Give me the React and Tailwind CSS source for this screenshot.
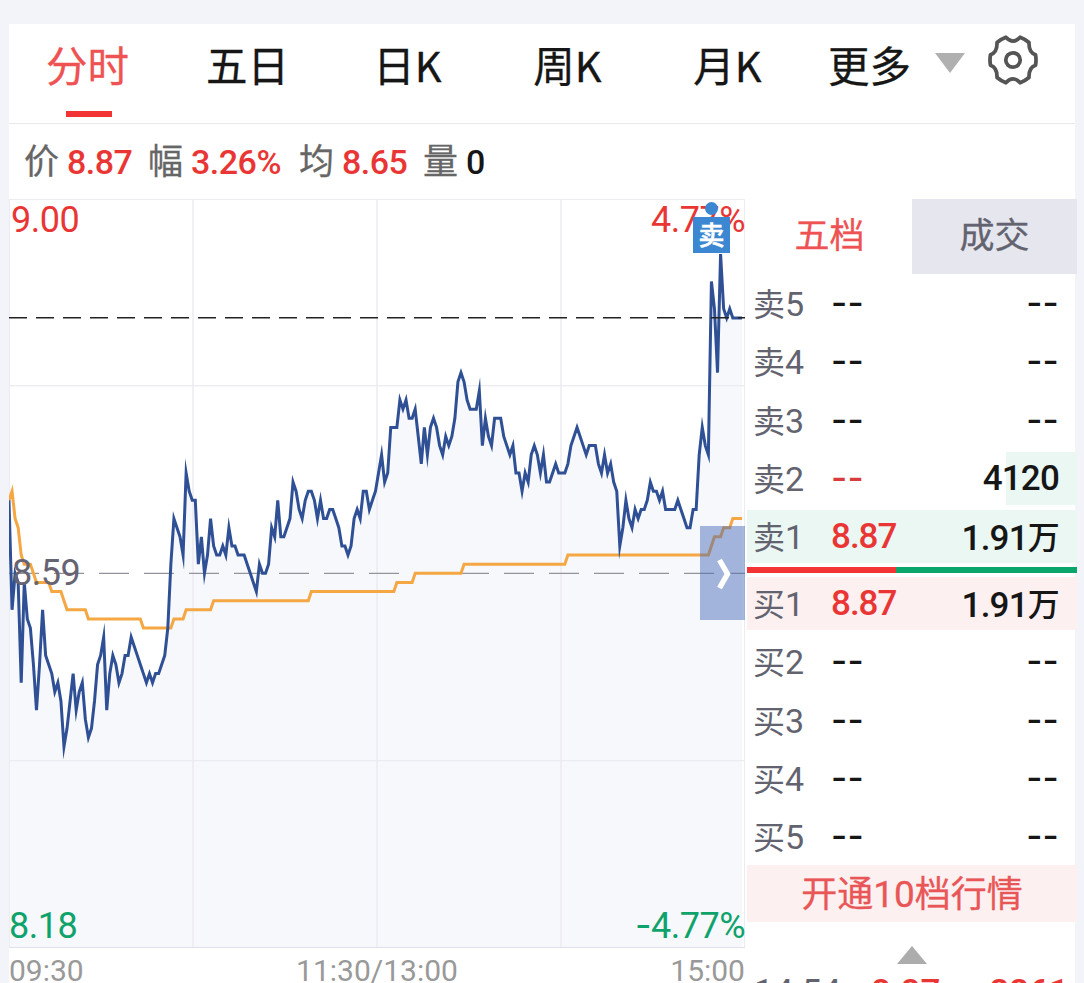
import React, { useState } from 'react';

const tabs = ['分时', '五日', '日K', '周K', '月K'];

const stats = [
  { label: '价', value: '8.87', tone: 'text-[#e93635]', width: 'w-[124px]' },
  { label: '幅', value: '3.26%', tone: 'text-[#e93635]', width: 'w-[151px]' },
  { label: '均', value: '8.65', tone: 'text-[#e93635]', width: 'w-[124px]' },
  { label: '量', value: '0', tone: 'text-[#161616]', width: 'w-[70px]' },
];

const asks = [
  { label: '卖', level: 5 },
  { label: '卖', level: 4 },
  { label: '卖', level: 3 },
  { label: '卖', level: 2, volume: '4120', depth: 21.5, red: true },
  { label: '卖', level: 1, price: '8.87', volume: '1.91', unit: '万', depth: 100 },
];

const bids = [
  { label: '买', level: 1, price: '8.87', volume: '1.91', unit: '万', depth: 100 },
  { label: '买', level: 2 },
  { label: '买', level: 3 },
  { label: '买', level: 4 },
  { label: '买', level: 5 },
];

// One value per minute, in cents relative to the previous close (8.59)
const prices = [
  8, -4, 0, -1, -12, -1, -5, -6, -10, -15, -10, -4, -9, -10, -11, -13, -12, -14, -19, -17,
  -14, -11, -15, -13, -12, -16, -18, -17, -14, -10, -9, -7, -15, -11, -9, -10, -12, -11, -9, -9,
  -7, -8, -9, -10, -11, -12, -11, -12, -11, -11, -10, -9, -6, 1, 6, 5, 4, 2, 11, 9,
  8, 8, 1, 4, 0, 2, 6, 3, 2, 2, 3, 2, 5, 3, 3, 2, 2, 2, 1, 0,
  -1, -2, 1, 0, 0, 1, 5, 4, 8, 4, 4, 5, 6, 10, 9, 7, 6, 8, 9, 9,
  8, 6, 8, 6, 6, 7, 7, 6, 5, 3, 3, 2, 3, 6, 7, 6, 9, 9, 7, 8,
  9, 11, 13, 10, 11, 16, 16, 16, 19, 18, 19, 17, 17, 18, 15, 12, 16, 13, 16, 17,
  16, 14, 13, 15, 14, 15, 17, 21, 22, 21, 19, 18, 18, 18, 20, 14, 17, 15, 14, 17,
  17, 17, 15, 14, 13, 14, 11, 11, 9, 11, 10, 13, 14, 13, 11, 13, 10, 10, 11, 12,
  11, 11, 11, 12, 14, 15, 16, 15, 14, 13, 14, 14, 14, 12, 11, 13, 11, 12, 10, 9,
  3, 5, 8, 6, 5, 7, 6, 7, 7, 8, 10, 9, 9, 8, 9, 7, 7, 7, 7, 8,
  7, 6, 5, 5, 7, 7, 13, 16, 14, 13, 32, 29, 22, 35, 29, 28, 29, 28, 28, 28,
  28,
];

// [minute, cents] corners of the average price line
const average = [
  [0, 8], [1, 9], [2, 6], [3, 5], [4, 2], [5, 1], [7, 1], [8, 0], [9, -1], [13, -1],
  [14, -2], [17, -2], [18, -3], [19, -4], [25, -4], [26, -5], [43, -5], [44, -6], [53, -6],
  [54, -5], [57, -5], [58, -4], [66, -4], [67, -3], [98, -3], [99, -2], [126, -2], [127, -1],
  [132, -1], [133, 0], [148, 0], [149, 1], [182, 1], [183, 2], [229, 2], [230, 3], [231, 4],
  [233, 4], [234, 5], [236, 5], [237, 6], [240, 6],
];

const px = (minute) => (minute * 3.054).toFixed(2);
const py = (cents) => (374.3 - cents * 9.12).toFixed(2);

const priceLine = prices.map((cents, i) => `${px(i)},${py(cents)}`).join(' ');
const averageLine = average.map(([minute, cents]) => `${px(minute)},${py(cents)}`).join(' ');

function GearIcon() {
  return (
    <svg width="52" height="52" viewBox="-27 -27 54 54" fill="none" stroke="#555" strokeWidth="3.9" strokeLinejoin="round">
      <path d="M7.4-23.6Q12.6-21.6 16.6-18.2Q16.2-7.9 23.4-5.4Q24.4 0 23.4 5.4Q16.2 7.9 16.6 18.2Q12.6 21.6 7.4 23.6Q0 15.6-7.4 23.6Q-12.6 21.6-16.6 18.2Q-16.2 7.9-23.4 5.4Q-24.4 0-23.4-5.4Q-16.2-7.9-16.6-18.2Q-12.6-21.6-7.4-23.6Q0-15.6 7.4-23.6Z" />
      <circle r="7.5" />
    </svg>
  );
}

function Chart() {
  return (
    <div className="relative h-[749px] w-[736px]">
      <svg width="736" height="749" viewBox="0 0 736 749" className="block overflow-hidden font-[Roboto,sans-serif]">
        <polygon points={`0,748 ${priceLine} 733,748`} fill="#f6f8fc" />
        <g fill="#ebecf2">
          <rect x="0" y="0" width="736" height="1" />
          <rect x="0" y="186" width="736" height="1.3" />
          <rect x="0" y="561" width="736" height="1.2" />
          <rect x="0" y="748" width="736" height="1" fill="#dfe1e8" />
          <rect x="0" y="0" width="1" height="748" />
          <rect x="183.2" y="0" width="1.6" height="748" />
          <rect x="367.2" y="0" width="1.6" height="748" />
          <rect x="551.2" y="0" width="1.6" height="748" />
          <rect x="735" y="0" width="1" height="748" />
        </g>
        <line x1="0" y1="374.4" x2="736" y2="374.4" stroke="#93939c" strokeWidth="1.3" strokeDasharray="30 15" />
        <polyline points={averageLine} fill="none" stroke="#f4a742" strokeWidth="3" strokeMiterlimit="10" />
        <polyline points={priceLine} fill="none" stroke="#2f5095" strokeWidth="3" strokeMiterlimit="10" />
        <line x1="0" y1="118.7" x2="736" y2="118.7" stroke="#222" strokeWidth="1.4" strokeDasharray="18 9" />
        <g fontSize="36" letterSpacing="-0.5">
          <text x="2" y="32.5" fill="#e93635">9.00</text>
          <text x="736" y="32.5" fill="#e93635" textAnchor="end">4.77%</text>
          <text x="3" y="385.5" fill="#666472">8.59</text>
          <text x="0" y="739" fill="#0fa36b">8.18</text>
          <text x="736" y="739" fill="#0fa36b" textAnchor="end">
            <tspan className="font-[Inter,sans-serif]">-</tspan>4.77%
          </text>
        </g>
      </svg>

      <span className="absolute top-[3px] left-[696px] size-[13px] rounded-full bg-[#3b87d1]" />
      <span className="absolute top-[18px] left-[684px] flex h-9 w-[37px] items-center justify-center bg-[#3b87d1] pb-[3px] text-[26px] leading-none font-medium text-white [-webkit-text-stroke:0.5px]">
        卖
      </span>
      <button className="absolute top-[327px] right-0 flex h-[94px] w-[45px] items-center justify-center bg-[#4468b6]/47">
        <svg width="20" height="36" viewBox="0 0 20 36" fill="none" stroke="#fff" strokeWidth="5.4">
          <path d="M6.5 5L14.5 19L6.5 33" />
        </svg>
      </button>
    </div>
  );
}

function QuoteRow({ row, tint }) {
  const empty = 'font-[Inter,sans-serif] text-[35px] leading-[51px] font-medium tracking-[0.2px]';
  return (
    <div className="relative h-[53px]">
      {row.depth && <div className={`absolute inset-y-0 right-0 ${tint}`} style={{ width: `${row.depth}%` }} />}
      <div className="relative flex h-full items-start pr-[18px] pl-1.5 leading-[53px]">
        <span className="w-[78px] text-[32px] leading-[50px] text-[#62636f]">
          {row.label}
          <span className="font-[Roboto,sans-serif] text-[34px]">{row.level}</span>
        </span>
        {row.price ? (
          <span className="font-[Roboto,sans-serif] text-[35px] font-medium tracking-[-1px] text-[#e93635]">{row.price}</span>
        ) : (
          <span className={`${empty} ${row.red ? 'text-[#d93c3c]' : 'text-[#161616]'}`}>--</span>
        )}
        {row.volume ? (
          <span className="ml-auto font-[Roboto,sans-serif] text-[35px] font-medium tracking-[-0.8px] text-[#161616]">
            {row.volume}
            {row.unit && (
              <span className="relative -top-px font-['Noto_Sans_CJK_SC',sans-serif] text-[32px]">{row.unit}</span>
            )}
          </span>
        ) : (
          <span className={`ml-auto text-[#161616] ${empty}`}>--</span>
        )}
      </div>
    </div>
  );
}

function OrderBook() {
  return (
    <aside className="-mr-0.5 w-[330px] shrink-0">
      <div className="flex h-[75px] text-[35px]">
        <button className="h-[75px] w-[165px] pb-[7px] text-[#ee5253] [-webkit-text-stroke:0.3px]">五档</button>
        <button className="h-[75px] w-[165px] bg-[#e6e6ee] pb-[7px] text-[#62636f] [-webkit-text-stroke:0.3px]">
          成交
        </button>
      </div>

      <div className="mt-[3px] flex flex-col gap-[5.3px]">
        {asks.map((row) => (
          <QuoteRow key={row.level} row={row} tint="bg-[#ebf7f3]" />
        ))}
      </div>
      <div className="my-1 flex h-1.5">
        <div className="w-[45%] bg-[#f23434]" />
        <div className="flex-1 bg-[#0aa66c]" />
      </div>
      <div className="flex flex-col gap-[5.3px]">
        {bids.map((row) => (
          <QuoteRow key={row.level} row={row} tint="bg-[#fdf0f1]" />
        ))}
      </div>

      <button className="mt-0.5 block h-[57px] w-full bg-[#fdf0f1] pb-1 text-[36px] leading-[53px] text-[#e95657] [-webkit-text-stroke:0.3px]">
        开通<span className="font-[Roboto,sans-serif] text-[37px]">10</span>档行情
      </button>
      <svg width="30" height="18" viewBox="0 0 30 18" className="mx-auto mt-6">
        <path d="M15 0L30 18H0Z" fill="#acacac" />
      </svg>
      <div className="mt-2 flex pr-2 pl-[7px] font-[Roboto,sans-serif] text-[35px] leading-[42px] font-medium text-[#e93635]">
        <span className="w-[117px] font-normal text-[#62636f]">14:54</span>
        <span>8.87</span>
        <span className="ml-auto">2261</span>
      </div>
    </aside>
  );
}

export default function App() {
  const [active, setActive] = useState('分时');

  return (
    <div className="h-[983px] overflow-hidden bg-[#f3f4f9] pt-6 pr-[9px] pl-[9px] font-['Noto_Sans_CJK_SC',sans-serif]">
      <div className="h-[959px] bg-white">
        <nav className="flex h-[100px] border-b border-[#e8e8ea] text-[41.5px] text-[#161616] [-webkit-text-stroke:0.3px]">
          {tabs.map((tab) => (
            <button
              key={tab}
              onClick={() => setActive(tab)}
              className={`flex w-[160px] flex-col items-center ${active === tab ? 'text-[#ee5253]' : ''}`}
            >
              <span className="mr-[3px] h-[87px] leading-[80px]">{tab}</span>
              {active === tab && <span className="h-1.5 w-[46px] bg-[#f23434]" />}
            </button>
          ))}
          <button className="ml-[19px] flex h-[84px] leading-[80px]">
            更多
            <svg width="30" height="20" viewBox="0 0 30 20" className="mt-[29px] ml-6">
              <path d="M0 0H30L15 20Z" fill="#b0b0b0" />
            </svg>
          </button>
          <button className="mt-2.5 ml-[22px] h-[52px]">
            <GearIcon />
          </button>
        </nav>

        <div className="flex h-[75px] pl-[15px]">
          {stats.map((item) => (
            <div key={item.label} className={`flex ${item.width}`}>
              <span className="text-[35px] leading-[70px] text-[#666] [-webkit-text-stroke:0.3px]">{item.label}</span>
              <span className={`ml-2 font-[Roboto,sans-serif] text-[34px] leading-[76px] font-medium tracking-[-0.5px] ${item.tone}`}>
                {item.value}
              </span>
            </div>
          ))}
        </div>

        <div className="flex gap-0.5">
          <div className="w-[736px] shrink-0">
            <Chart />
            <div className="flex justify-between font-[Roboto,sans-serif] text-[30px] leading-[45px] text-[#999]">
              <span>09:30</span>
              <span>11:30/13:00</span>
              <span>15:00</span>
            </div>
          </div>
          <OrderBook />
        </div>
      </div>
    </div>
  );
}
